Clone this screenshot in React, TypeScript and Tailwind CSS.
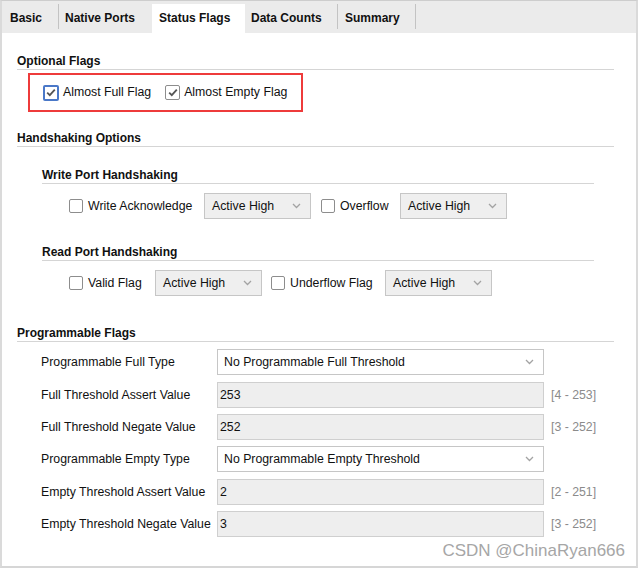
import React from "react";

const Chevron = () => (
  <svg width="9" height="6" viewBox="0 0 9 6" fill="none">
    <path d="M1 1L4.5 4.5L8 1" stroke="#a3a3a3" strokeWidth="1.3" />
  </svg>
);

function Check({ checked = false, focus = false }: { checked?: boolean; focus?: boolean }) {
  const cls = focus
    ? "w-[16px] h-[16px] border-2 border-[#4a78c8]"
    : checked
    ? "w-[15px] h-[15px] border border-[#8d8d8d]"
    : "w-[14px] h-[14px] border border-[#8d8d8d]";
  return (
    <span className={`flex items-center justify-center shrink-0 bg-white rounded-[2px] ${cls}`}>
      {checked && (
        <svg width="10" height="9" viewBox="0 0 10 9">
          <path d="M1.2 4.6L3.8 7.2L8.8 1.6" stroke="#555555" strokeWidth="1.8" fill="none" />
        </svg>
      )}
    </span>
  );
}

function Drop() {
  return (
    <div className="w-[107px] h-[26px] shrink-0 bg-[#efefef] border border-[#c6c6c6] flex items-center justify-between pl-[7px] pr-[9px]">
      <span>Active High</span>
      <Chevron />
    </div>
  );
}

function Heading({ children, mt }: { children: React.ReactNode; mt: string }) {
  return <div className={`${mt} font-bold text-[12px] leading-[16px] border-b border-[#d5d5d5]`}>{children}</div>;
}

export default function App() {
  return (
    <div className="w-[640px] h-[569px] bg-white text-[12.3px] text-[#111111] font-['Liberation_Sans',Arial,sans-serif]">
      <div className="relative w-[638px] h-[568px] border-t border-t-[#cdcdcd] border-x-2 border-x-[#dadada] border-b-2 border-b-[#d6d6d6] flex flex-col">
        {/* Tabs */}
        <div className="h-[32px] shrink-0 bg-[#ebebeb] flex items-stretch pt-[3px] font-bold text-[12px]">
          <div className="w-[56px] flex items-center pl-[8px] pb-[1px]">Basic</div>
          <div className="w-px h-[25px] bg-[#c3c3c3] self-start"></div>
          <div className="w-[93px] flex items-center pl-[6px] pb-[1px]">Native Ports</div>
          <div className="w-[93px] flex items-center pl-[7px] pb-[1px] bg-white">Status Flags</div>
          <div className="w-[92px] flex items-center pl-[6px] pb-[1px]">Data Counts</div>
          <div className="w-px h-[25px] bg-[#c3c3c3] self-start"></div>
          <div className="w-[77px] flex items-center pl-[7px] pb-[1px]">Summary</div>
          <div className="w-px h-[25px] bg-[#c3c3c3] self-start"></div>
        </div>

        {/* Content */}
        <div className="pl-[15px] pr-[22px] flex flex-col">
          <Heading mt="mt-[20px]">Optional Flags</Heading>
          <div className="mt-[3px] ml-[11px] w-[275px] h-[39px] border-2 border-[#ee3b3b] flex items-center pl-[13px]">
            <Check checked focus />
            <span className="ml-[4px]">Almost Full Flag</span>
            <span className="ml-[14px]"><Check checked /></span>
            <span className="ml-[4px]">Almost Empty Flag</span>
          </div>

          <Heading mt="mt-[18px]">Handshaking Options</Heading>
          <div className="ml-[25px] mr-[20px] flex flex-col">
            <Heading mt="mt-[20px]">Write Port Handshaking</Heading>
            <div className="mt-[9px] h-[26px] flex items-center pl-[27px]">
              <Check />
              <span className="ml-[5px] w-[116px]">Write Acknowledge</span>
              <Drop />
              <span className="ml-[10px]"><Check /></span>
              <span className="ml-[5px] w-[60px]">Overflow</span>
              <Drop />
            </div>
            <Heading mt="mt-[25px]">Read Port Handshaking</Heading>
            <div className="mt-[9px] h-[26px] flex items-center pl-[27px]">
              <Check />
              <span className="ml-[5px] w-[67px]">Valid Flag</span>
              <Drop />
              <span className="ml-[9px]"><Check /></span>
              <span className="ml-[5px] w-[95px]">Underflow Flag</span>
              <Drop />
            </div>
          </div>

          <Heading mt="mt-[29px]">Programmable Flags</Heading>
          <div className="flex flex-col pl-[24px]">
            <div className="mt-[7px] h-[26px] flex items-center">
              <span className="w-[176px]">Programmable Full Type</span>
              <div className="w-[327px] h-[26px] bg-white border border-[#c6c6c6] flex items-center justify-between pl-[6px] pr-[9px]">
                <span>No Programmable Full Threshold</span>
                <Chevron />
              </div>
            </div>
            <div className="mt-[7px] h-[26px] flex items-center">
              <span className="w-[176px]">Full Threshold Assert Value</span>
              <div className="w-[327px] h-[26px] bg-[#eeeeee] border border-[#cfcfcf] flex items-center pl-[2px]">253</div>
              <span className="ml-[7px] text-[#8b8b8b]">[4 - 253]</span>
            </div>
            <div className="mt-[6px] h-[26px] flex items-center">
              <span className="w-[176px]">Full Threshold Negate Value</span>
              <div className="w-[327px] h-[26px] bg-[#eeeeee] border border-[#cfcfcf] flex items-center pl-[2px]">252</div>
              <span className="ml-[7px] text-[#8b8b8b]">[3 - 252]</span>
            </div>
            <div className="mt-[6px] h-[26px] flex items-center">
              <span className="w-[176px]">Programmable Empty Type</span>
              <div className="w-[327px] h-[26px] bg-white border border-[#c6c6c6] flex items-center justify-between pl-[6px] pr-[9px]">
                <span>No Programmable Empty Threshold</span>
                <Chevron />
              </div>
            </div>
            <div className="mt-[7px] h-[26px] flex items-center">
              <span className="w-[176px]">Empty Threshold Assert Value</span>
              <div className="w-[327px] h-[26px] bg-[#eeeeee] border border-[#cfcfcf] flex items-center pl-[2px]">2</div>
              <span className="ml-[7px] text-[#8b8b8b]">[2 - 251]</span>
            </div>
            <div className="mt-[6px] h-[26px] flex items-center">
              <span className="w-[176px]">Empty Threshold Negate Value</span>
              <div className="w-[327px] h-[26px] bg-[#eeeeee] border border-[#cfcfcf] flex items-center pl-[2px]">3</div>
              <span className="ml-[7px] text-[#8b8b8b]">[3 - 252]</span>
            </div>
          </div>
        </div>

        <div className="absolute right-[11px] top-[540px] text-[17px] leading-[20px] text-[#a6a6a6]">CSDN @ChinaRyan666</div>
      </div>
    </div>
  );
}
